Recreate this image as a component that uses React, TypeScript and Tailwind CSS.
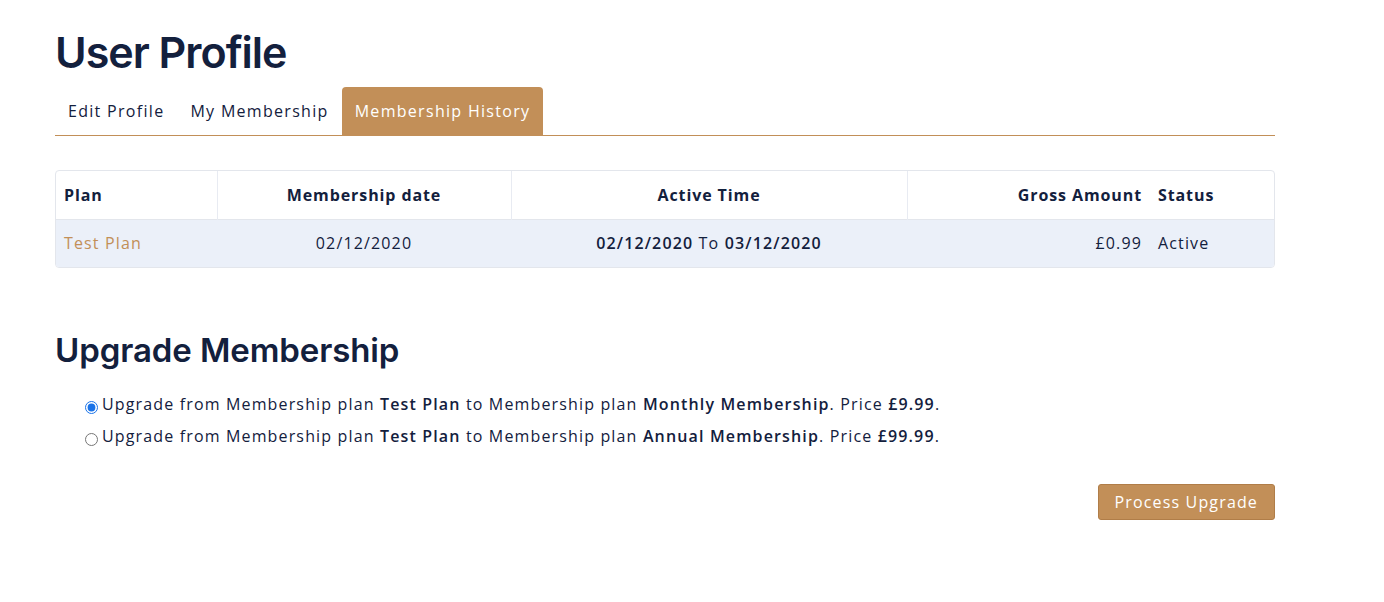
import { useState } from "react";

const plans = [
  { id: "monthly", name: "Monthly Membership", price: "£9.99" },
  { id: "annual", name: "Annual Membership", price: "£99.99" },
];

export default function App() {
  const [selected, setSelected] = useState("monthly");

  return (
    <div className="min-h-[602px] bg-white font-['Open_Sans',sans-serif] text-[#13203d] tracking-[1.15px]">
      <div className="mx-[55px] w-[1220px] pt-[26px]">
        <h1 className="font-['Inter',sans-serif] text-[43px] font-semibold leading-[52px] tracking-[-1px]">
          User Profile
        </h1>

        {/* tabs */}
        <div className="mt-[9px] flex text-[16px] tracking-[1.3px]">
          <button className="px-[13px] py-[12px] leading-[24px] text-[#13203d]">Edit Profile</button>
          <button className="px-[13px] py-[12px] leading-[24px] text-[#13203d]">My Membership</button>
          <button className="rounded-t-[4px] bg-[#c28f58] px-[13px] py-[12px] leading-[24px] text-white">
            Membership History
          </button>
        </div>
        <div className="h-px bg-[#c28f58]" />

        <div className="mt-[34px] overflow-hidden rounded-[4px] border border-[#e3e6ec]">
          <table className="w-full border-collapse text-[16px]">
            <thead>
              <tr className="h-[48px] font-semibold tracking-[0.9px]">
                <th className="w-[161px] border-r border-[#e8ebf2] px-[8px] text-left">Plan</th>
                <th className="w-[294px] border-r border-[#e8ebf2] px-[8px] text-center">Membership date</th>
                <th className="w-[396px] border-r border-[#e8ebf2] px-[8px] text-center">Active Time</th>
                <th className="w-[243px] px-[8px] text-right">Gross Amount</th>
                <th className="px-[8px] text-left">Status</th>
              </tr>
            </thead>
            <tbody>
              <tr className="h-[48px] border-t border-[#e3e6ec] bg-[#ebf0f9]">
                <td className="px-[8px] text-[#c28f58]">Test Plan</td>
                <td className="px-[8px] text-center">02/12/2020</td>
                <td className="px-[8px] text-center">
                  <b className="font-semibold">02/12/2020</b> To <b className="font-semibold">03/12/2020</b>
                </td>
                <td className="px-[8px] text-right">£0.99</td>
                <td className="px-[8px]">Active</td>
              </tr>
            </tbody>
          </table>
        </div>

        <h2 className="mt-[60px] font-['Inter',sans-serif] text-[33px] font-semibold leading-[44px] tracking-[-0.1px]">
          Upgrade Membership
        </h2>

        <div className="mt-[20px] flex flex-col gap-[8px] pl-[30px] text-[16px]">
          {plans.map((p) => (
            <label key={p.id} className="flex items-center leading-[24px]">
              <input
                type="radio"
                name="plan"
                checked={selected === p.id}
                onChange={() => setSelected(p.id)}
                className="mr-[4px] mt-[6px] h-[13px] w-[13px] accent-[#1a73e8]"
              />
              <span>
                Upgrade from Membership plan <b className="font-semibold">Test Plan</b> to Membership plan{" "}
                <b className="font-semibold">{p.name}</b>. Price <b className="font-semibold">{p.price}</b>.
              </span>
            </label>
          ))}
        </div>

        <div className="mt-[36px] flex justify-end">
          <button className="h-[36px] rounded-[3px] border border-[#b07d48] bg-[#c28f58] px-[16px] text-[16px] text-white">
            Process Upgrade
          </button>
        </div>
      </div>
    </div>
  );
}
